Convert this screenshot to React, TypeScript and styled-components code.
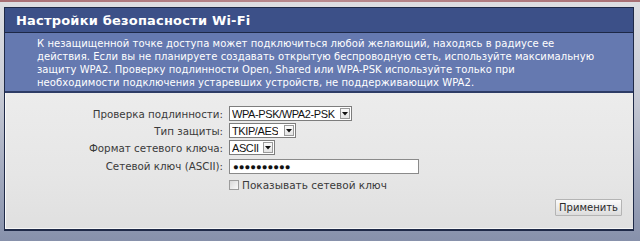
import React from "react";
import styled, { createGlobalStyle } from "styled-components";

const Global = createGlobalStyle`
  html, body { margin: 0; padding: 0; }
  body {
    width: 640px;
    height: 241px;
    overflow: hidden;
    background: linear-gradient(to bottom, #dedee2 0px, #c9ccd6 90px, #a4abbf 170px, #8791ab 241px);
    font-family: "DejaVu Sans", Verdana, sans-serif;
  }
`;

const TopEdge = styled.div`
  height: 2px;
  background: linear-gradient(to right, #a86f74, #b88a8e 50%, #a86f74);
`;

const Page = styled.div`
  padding: 5px 6px 0 4px;
`;

const Panel = styled.div`
  width: 628px;
  border: 1px solid #1f2a48;
  border-bottom-width: 2px;
  display: flex;
  flex-direction: column;
`;

const TitleBar = styled.div`
  background: #3c5088;
  border-bottom: 1px solid #1d2846;
  display: flex;
  align-items: center;
  padding-left: 11px;
  box-sizing: border-box;
  height: 25px;
`;

const Title = styled.h1`
  margin: 0;
  font-family: "DejaVu Sans", Verdana, sans-serif;
  font-weight: bold;
  font-size: 13px;
  color: #ffffff;
  letter-spacing: 0.2px;
`;

const Description = styled.div`
  background: #6579b0;
  color: #ffffff;
  font-size: 10px;
  letter-spacing: 0.05px;
  line-height: 13px;
  white-space: nowrap;
  padding: 4px 10px 2px 32px;
  border-bottom: 2px solid #2e3c66;
`;

const Form = styled.div`
  background: linear-gradient(to bottom, #ececec, #e6e6e6 60%, #e0e0e0);
  border-left: 1px solid #fafafa;
  border-bottom: 1px solid #f6f6f6;
  padding: 12px 11px 12px 4px;
  display: flex;
  flex-direction: column;
`;

const Grid = styled.div`
  display: grid;
  grid-template-columns: 213px 1fr;
  grid-template-rows: 17px 17px 17px 20px 18px;
  column-gap: 6px;
  align-items: center;
`;

const Label = styled.div`
  text-align: right;
  font-size: 10.3px;
  color: #3a3a3a;
  white-space: nowrap;
`;

const Control = styled.div`
  display: flex;
  align-items: center;
`;

const SelectBox = styled.div<{ $w: number }>`
  width: ${(p) => p.$w}px;
  height: 15px;
  box-sizing: border-box;
  background: #ffffff;
  border: 1px solid #7d7d7d;
  display: flex;
  align-items: center;
  justify-content: space-between;
  gap: 2px;
  padding: 0 1px 0 2px;
`;

const SelectText = styled.span`
  font-family: "Liberation Sans", Arial, sans-serif;
  font-size: 11px;
  letter-spacing: -0.4px;
  color: #111;
  white-space: nowrap;
  overflow: hidden;
`;

const ArrowBtn = styled.span`
  flex: none;
  width: 10px;
  height: 11px;
  box-sizing: border-box;
  border: 1px solid #9a9a9a;
  background: linear-gradient(to bottom, #fbfbfb, #e4e4e4);
  display: flex;
  align-items: center;
  justify-content: center;
`;

const TextInput = styled.input`
  width: 190px;
  height: 15px;
  box-sizing: border-box;
  border: 1px solid #8a8a8a;
  background: #fff;
  margin: 0;
  padding: 0 3px;
  font-family: "Liberation Sans", Arial, sans-serif;
  font-size: 9.5px;
  color: #111;
  outline: none;
`;

const CheckRow = styled.label`
  display: flex;
  align-items: center;
  gap: 3px;
  font-size: 10.5px;
  color: #3a3a3a;
`;

const CheckBox = styled.span`
  width: 10px;
  height: 10px;
  box-sizing: border-box;
  border: 1px solid #9c9c9c;
  background: linear-gradient(135deg, #d8d8d8, #fafafa);
`;

const Footer = styled.div`
  display: flex;
  justify-content: flex-end;
  margin-top: 5px;
`;

const Button = styled.button`
  width: 67px;
  height: 17px;
  box-sizing: border-box;
  border: 1px solid #b4b4b4;
  border-radius: 1px;
  background: linear-gradient(to bottom, #fbfbfb, #ececec 50%, #dcdcdc);
  font-family: "DejaVu Sans", Verdana, sans-serif;
  font-size: 10px;
  color: #2a2a2a;
  padding: 0;
  margin: 0;
`;

const Arrow = () => (
  <svg width="6" height="4" viewBox="0 0 6 4">
    <path d="M0 0 H6 L3 3.5 Z" fill="#111" />
  </svg>
);

const Select = ({ value, w }: { value: string; w: number }) => (
  <SelectBox $w={w}>
    <SelectText>{value}</SelectText>
    <ArrowBtn>
      <Arrow />
    </ArrowBtn>
  </SelectBox>
);

export default function App() {
  return (
    <>
      <Global />
      <TopEdge />
      <Page>
        <Panel>
          <TitleBar>
            <Title>Настройки безопасности Wi-Fi</Title>
          </TitleBar>
          <Description>
            К незащищенной точке доступа может подключиться любой желающий, находясь в радиусе ее
            <br />
            действия. Если вы не планируете создавать открытую беспроводную сеть, используйте максимальную
            <br />
            защиту WPA2. Проверку подлинности Open, Shared или WPA-PSK используйте только при
            <br />
            необходимости подключения устаревших устройств, не поддерживающих WPA2.
          </Description>
          <Form>
            <Grid>
              <Label>Проверка подлинности:</Label>
              <Control>
                <Select value="WPA-PSK/WPA2-PSK" w={123} />
              </Control>
              <Label>Тип защиты:</Label>
              <Control>
                <Select value="TKIP/AES" w={67} />
              </Control>
              <Label>Формат сетевого ключа:</Label>
              <Control>
                <Select value="ASCII" w={46} />
              </Control>
              <Label>Сетевой ключ (ASCII):</Label>
              <Control>
                <TextInput readOnly value="●●●●●●●●●●" />
              </Control>
              <span />
              <Control>
                <CheckRow>
                  <CheckBox />
                  Показывать сетевой ключ
                </CheckRow>
              </Control>
            </Grid>
            <Footer>
              <Button>Применить</Button>
            </Footer>
          </Form>
        </Panel>
      </Page>
    </>
  );
}
